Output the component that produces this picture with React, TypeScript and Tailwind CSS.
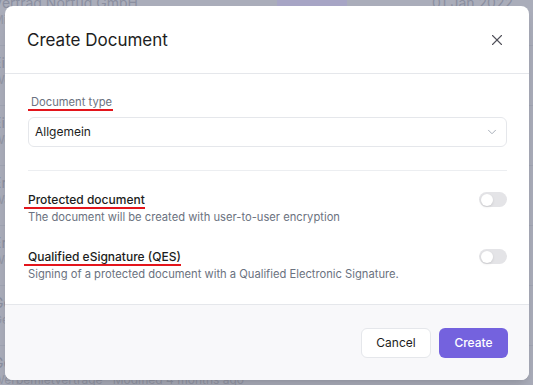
import { X, ChevronDown } from "lucide-react";

const rows = [
  { title: "Vertrag Norfug GmbH", sub: "Mietvertrag   Modified 2 months ago" },
  { title: "Eigenbedarf Kündigung", sub: "Wohnungsübergabe   Modified 3 months ago" },
  { title: "Einzugsprotokoll", sub: "Wohnungsmiete   Modified 3 months ago" },
  { title: "Erhöhung Nebenkosten", sub: "Wartung   Modified 3 months ago" },
  { title: "Erklärung Mieter", sub: "Wohnraum   Modified 4 months ago" },
  { title: "Gewerbemiete Lager", sub: "Gewerbe   Modified 4 months ago" },
  { title: "Gewerbemiete 2022", sub: "Werbemietverträge   Modified 4 months ago" },
];

function Toggle() {
  return (
    <div className="-mt-px w-[28px] h-[15px] shrink-0 rounded-full bg-[#e4e4e7] p-[1.5px] flex items-center">
      <div className="w-[12px] h-[12px] rounded-full bg-white shadow-sm" />
    </div>
  );
}

function OptionRow({ title, desc, className }: { title: string; desc: string; className?: string }) {
  return (
    <div className={`flex items-start justify-between ${className ?? ""}`}>
      <div className="flex flex-col">
        <span className="block w-fit -ml-[4px] pl-[4px] border-b-2 border-[#e3151c] text-[12px] leading-[14px] font-medium text-[#1c1d21]">
          {title}
        </span>
        <span className="text-[11.2px] leading-[16px] text-[#6b7280]">{desc}</span>
      </div>
      <Toggle />
    </div>
  );
}

export default function App() {
  return (
    <div
      className="relative w-[533px] h-[385px] overflow-hidden bg-[#aaadba]"
      style={{ fontFamily: "Inter, 'Noto Sans', sans-serif" }}
    >
      {/* page behind the dialog */}
      <div className="-mt-[14px] -ml-[7px] flex flex-col">
        {rows.map((r, i) => (
          <div key={i} className="h-[60px] shrink-0 flex items-start justify-between border-b border-[#a1a5b3] pt-[8px] pr-[20px]">
            <div className="flex flex-col">
              <span className="text-[14px] leading-[18px] text-[#8b8fa0]">{r.title}</span>
              <span className="text-[12px] leading-[16px] text-[#9396a5] whitespace-pre">{r.sub}</span>
            </div>
            {i === 0 && (
              <div className="flex items-start gap-[85px]">
                <span className="h-[20px] w-[70px] rounded bg-[#a7a5c5]" />
                <span className="text-[14px] leading-[18px] text-[#8b8fa0]">01.Jan 2022</span>
              </div>
            )}
          </div>
        ))}
      </div>

      {/* dialog */}
      <div className="absolute left-[5px] top-[6px] w-[524px] rounded-lg bg-white overflow-hidden flex flex-col shadow-lg">
        <div className="flex items-center justify-between pl-[22px] pr-[23px] pt-[20px] pb-[19px] border-b border-[#e5e7eb]">
          <h2 className="text-[17px] leading-[28px] text-[#1c1d21]">Create Document</h2>
          <X size={18} strokeWidth={1.5} className="text-[#52525b]" />
        </div>

        <div className="pl-[23px] pr-[22px] pt-[21px] pb-[22px] flex flex-col">
          <span className="block w-fit pl-[3px] pr-[1px] border-b-2 border-[#e3151c] text-[11.2px] leading-[14px] text-[#6b7280]">
            Document type
          </span>
          <div className="mt-[6px] h-[30px] rounded-md border border-[#e5e7eb] flex items-center justify-between pl-[6px] pr-[7px]">
            <span className="text-[12px] text-[#1c1d21]">Allgemein</span>
            <ChevronDown size={14} strokeWidth={1.5} className="text-[#9ca3af]" />
          </div>

          <div className="mt-[23px] h-px bg-[#eceef1]" />

          <OptionRow
            className="mt-[22px]"
            title="Protected document"
            desc="The document will be created with user-to-user encryption"
          />
          <OptionRow
            className="mt-[25px]"
            title="Qualified eSignature (QES)"
            desc="Signing of a protected document with a Qualified Electronic Signature."
          />
        </div>

        <div className="border-t border-[#e5e7eb] bg-[#f8f8fa] flex justify-end gap-[8px] pr-[21px] pt-[23px] pb-[22px]">
          <button className="h-[30px] w-[70px] rounded-md border border-[#e5e7eb] bg-white text-[12px] text-[#1c1d21]">
            Cancel
          </button>
          <button className="h-[30px] w-[69px] rounded-md bg-[#7462de] text-[12px] font-medium text-white">
            Create
          </button>
        </div>
      </div>
    </div>
  );
}
